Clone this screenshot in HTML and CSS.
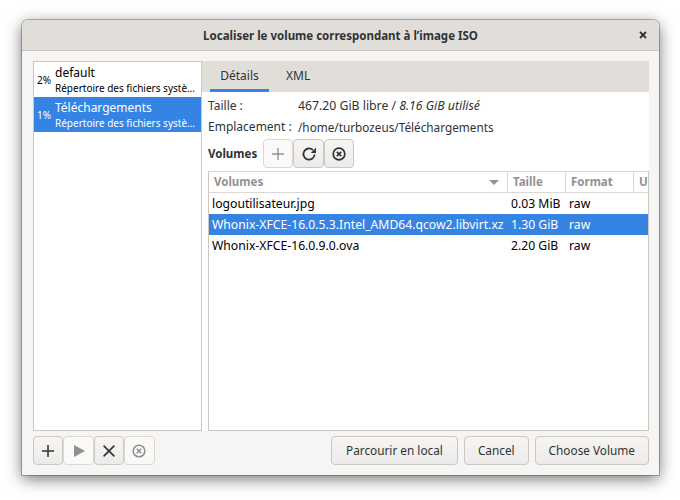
FILE: index.html
```html
<!DOCTYPE html>
<html lang="fr">
<head>
  <meta charset="UTF-8">
  <title>Localiser le volume correspondant à l'image ISO</title>
  <link rel="stylesheet" href="styles.css">
</head>
<body>
  <div class="window">
    <header class="titlebar">
      <span class="title">Localiser le volume correspondant à l’image ISO</span>
      <svg class="close" width="8" height="8" viewBox="0 0 8 8"><path d="M1 1L7 7M7 1L1 7" stroke="#2e3436" stroke-width="1.8"/></svg>
    </header>
    <div class="content">
      <div class="main">
        <ul class="pools">
          <li class="pool">
            <span class="pct">2%</span>
            <div class="pool-text">
              <div class="pool-name">default</div>
              <div class="pool-desc">Répertoire des fichiers systè…</div>
            </div>
          </li>
          <li class="pool selected">
            <span class="pct">1%</span>
            <div class="pool-text">
              <div class="pool-name">Téléchargements</div>
              <div class="pool-desc">Répertoire des fichiers systè…</div>
            </div>
          </li>
        </ul>
        <div class="details">
          <div class="tabs">
            <div class="tab active">Détails</div>
            <div class="tab">XML</div>
          </div>
          <div class="info">
            <div class="info-row"><span class="info-label">Taille :</span><span class="info-size">467.20 GiB libre / <em>8.16 GiB utilisé</em></span></div>
            <div class="info-row"><span class="info-label">Emplacement :</span><span class="info-path">/home/turbozeus/Téléchargements</span></div>
          </div>
          <div class="volbar">
            <strong class="vol-label">Volumes</strong>
            <div class="btn-group">
              <button class="icon-btn off"><svg width="16" height="16" viewBox="0 0 16 16"><path d="M8 2V14M2 8H14" stroke="#8e9192" stroke-width="1.3"/></svg></button>
              <button class="icon-btn"><svg width="16" height="16" viewBox="0 0 16 16"><path d="M13.6 8.5A5.6 5.6 0 1 1 11.9 4" fill="none" stroke="#2e3436" stroke-width="1.8"/><path d="M9.8 7H15V1.8Z" fill="#2e3436"/></svg></button>
              <button class="icon-btn"><svg width="16" height="16" viewBox="0 0 16 16"><circle cx="8" cy="8" r="5.8" fill="none" stroke="#2e3436" stroke-width="1.7"/><path d="M5.8 5.8L10.2 10.2M10.2 5.8L5.8 10.2" stroke="#2e3436" stroke-width="1.7"/></svg></button>
            </div>
          </div>
          <div class="table">
            <div class="thead">
              <div class="th col-name">Volumes<span class="sort"></span></div>
              <div class="th col-size">Taille</div>
              <div class="th col-format">Format</div>
              <div class="th col-used">U</div>
            </div>
            <div class="tr">
              <div class="td col-name">logoutilisateur.jpg</div>
              <div class="td col-size">0.03 MiB</div>
              <div class="td col-format">raw</div>
            </div>
            <div class="tr selected">
              <div class="td col-name">Whonix-XFCE-16.0.5.3.Intel_AMD64.qcow2.libvirt.xz</div>
              <div class="td col-size">1.30 GiB</div>
              <div class="td col-format">raw</div>
            </div>
            <div class="tr">
              <div class="td col-name">Whonix-XFCE-16.0.9.0.ova</div>
              <div class="td col-size">2.20 GiB</div>
              <div class="td col-format">raw</div>
            </div>
          </div>
        </div>
      </div>
      <footer class="actions">
        <div class="btn-group">
          <button class="icon-btn"><svg width="16" height="16" viewBox="0 0 16 16"><path d="M8 2V14M2 8H14" stroke="#2e3436" stroke-width="1.5"/></svg></button>
          <button class="icon-btn off"><svg width="16" height="16" viewBox="0 0 16 16"><path d="M3 2L14 8L3 14Z" fill="#8e9192"/></svg></button>
          <button class="icon-btn"><svg width="16" height="16" viewBox="0 0 16 16"><path d="M2.6 2.6L13.4 13.4M13.4 2.6L2.6 13.4" stroke="#2e3436" stroke-width="1.6"/></svg></button>
          <button class="icon-btn off"><svg width="16" height="16" viewBox="0 0 16 16"><circle cx="8" cy="8" r="5.8" fill="none" stroke="#8e9192" stroke-width="1.6"/><path d="M5.8 5.8L10.2 10.2M10.2 5.8L5.8 10.2" stroke="#8e9192" stroke-width="1.6"/></svg></button>
        </div>
        <div class="text-btns">
          <button class="text-btn wide">Parcourir en local</button>
          <button class="text-btn">Cancel</button>
          <button class="text-btn">Choose Volume</button>
        </div>
      </footer>
    </div>
  </div>
</body>
</html>
```

FILE: styles.css
```css
* {
  box-sizing: border-box;
}
body {
  margin: 0;
  width: 680px;
  height: 500px;
  padding: 20px 21px 25px 22px;
  background: #fff;
  font-family: "Noto Sans", sans-serif;
  font-size: 12px;
  color: #2e3436;
  overflow: hidden;
}
.window {
  height: 455px;
  display: flex;
  flex-direction: column;
  background: #f6f5f4;
  border-radius: 6px 6px 0 0;
  box-shadow: 0 0 0 1px rgba(0,0,0,0.25), 0 4px 16px rgba(0,0,0,0.55);
}
.titlebar {
  height: 31px;
  flex: none;
  display: flex;
  align-items: center;
  justify-content: center;
  position: relative;
  background: #e1deda;
  border-bottom: 1px solid #c9c4bf;
  border-radius: 6px 6px 0 0;
}
.title {
  font-weight: 700;
  font-size: 11.5px;
  color: #2e3436;
}
.close {
  position: absolute;
  right: 12px;
  top: 11px;
}
.content {
  flex: 1;
  display: flex;
  flex-direction: column;
  padding: 10px 10px 10px 11px;
  min-height: 0;
}
.main {
  height: 370px;
  flex: none;
  display: flex;
}
.pools {
  width: 169px;
  flex: none;
  margin: 0;
  padding: 0;
  list-style: none;
  background: #fff;
  border: 1px solid #cdc7c2;
}
.pool {
  height: 35px;
  display: flex;
  align-items: center;
  gap: 4px;
  padding-left: 3px;
  color: #000;
}
.pool.selected {
  background: #3584e4;
  color: #fff;
}
.pct {
  width: 14px;
  font-size: 10px;
}
.pool-name {
  font-size: 12px;
  line-height: 17px;
}
.pool-desc {
  font-size: 10px;
  line-height: 14px;
  white-space: nowrap;
}
.details {
  flex: 1;
  min-width: 0;
  display: flex;
  flex-direction: column;
  background: #fff;
}
.tabs {
  height: 31px;
  flex: none;
  display: flex;
  padding-left: 8px;
  background: #e1deda;
}
.tab {
  padding: 0 10px;
  width: 59px;
  text-align: center;
  line-height: 29px;
}
.tab + .tab {
  width: auto;
  margin-left: 7px;
}
.tab.active {
  border-bottom: 3px solid #3584e4;
  height: 31px;
}
.info {
  padding: 3px 0 0 6px;
}
.info-row {
  display: flex;
  height: 21px;
  align-items: center;
}
.info-label {
  width: 90px;
  flex: none;
}
.info-size {
  font-size: 12.25px;
}
.info-path {
  font-size: 11.75px;
}
.volbar {
  display: flex;
  align-items: center;
  margin-top: 2px;
  padding-left: 6px;
}
.vol-label {
  width: 55px;
  font-size: 11.5px;
  font-weight: 700;
}
.btn-group {
  display: flex;
}
.icon-btn {
  width: 30.4px;
  height: 29px;
  padding: 0;
  display: flex;
  align-items: center;
  justify-content: center;
  background: linear-gradient(#f6f5f4, #edebe9);
  border: 1px solid #cdc7c2;
  border-radius: 4px;
}
.icon-btn.off {
  background: #faf9f8;
  border-color: #dcd8d4;
}
.table {
  flex: 1;
  min-height: 0;
  margin: 3px 0 0 6px;
  background: #fff;
  border: 1px solid #cdc7c2;
  border-top-color: #dcd8d4;
  overflow: hidden;
}
.thead {
  display: flex;
  height: 21px;
  border-bottom: 1px solid #dcd8d4;
  color: #919191;
  font-size: 11.5px;
  font-weight: 700;
}
.th {
  position: relative;
  padding-left: 5px;
  line-height: 20px;
  border-right: 1px solid #dcd8d4;
}
.sort {
  position: absolute;
  right: 8px;
  top: 8px;
  border-left: 5px solid transparent;
  border-right: 5px solid transparent;
  border-top: 5px solid #919191;
}
.col-name {
  width: 299px;
  flex: none;
}
.col-size {
  width: 58px;
  flex: none;
}
.col-format {
  width: 68px;
  flex: none;
}
.col-used {
  border-right: 0;
  flex: 1;
}
.tr {
  display: flex;
  height: 21px;
  align-items: center;
  font-size: 12.2px;
  color: #000;
}
.tr.selected {
  background: #3584e4;
  color: #fff;
}
.td {
  padding-left: 3px;
  white-space: nowrap;
}
.actions {
  display: flex;
  justify-content: space-between;
  margin-top: 5px;
}
.text-btns {
  display: flex;
  gap: 6px;
}
.text-btn {
  height: 29px;
  padding: 0 13px 2px;
  font-family: inherit;
  font-size: 11.8px;
  color: #2e3436;
  background: linear-gradient(#f6f5f4, #edebe9);
  border: 1px solid #cdc7c2;
  border-radius: 4px;
}
.text-btn.wide {
  padding: 0 14px 2px;
}
```
